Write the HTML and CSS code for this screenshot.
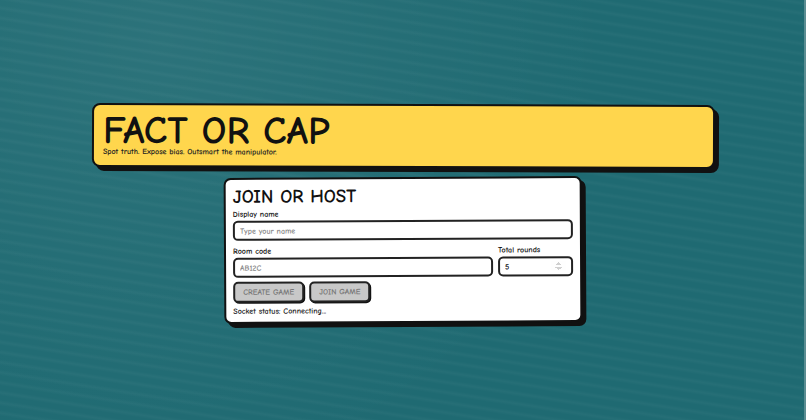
FILE: index.html
```html
<!DOCTYPE html>
<html lang="en">
<head>
    <meta charset="UTF-8">
    <meta name="viewport" content="width=device-width, initial-scale=1.0">
    <title>Fact or Cap</title>
    <link rel="stylesheet" href="styles.css">
</head>
<body>
    <main class="app">
        <header class="hero">
            <h1>FACT OR CAP</h1>
            <p>Spot truth. Expose bias. Outsmart the manipulator.</p>
        </header>

        <form class="panel">
            <h2>JOIN OR HOST</h2>
            <div class="field">
                <label for="name">Display name</label>
                <input type="text" id="name" placeholder="Type your name">
            </div>
            <div class="row">
                <div class="field field-code">
                    <label for="code">Room code</label>
                    <input type="text" id="code" placeholder="AB12C">
                </div>
                <div class="field field-rounds">
                    <label for="rounds">Total rounds</label>
                    <input type="number" id="rounds" min="1" max="20" value="5">
                </div>
            </div>
            <div class="actions">
                <button type="button" disabled>CREATE GAME</button>
                <button type="button" disabled>JOIN GAME</button>
            </div>
            <p class="status">Socket status: Connecting...</p>
        </form>
    </main>
</body>
</html>
```

FILE: styles.css
```css
* {
    box-sizing: border-box;
}

/* Body styles */
body {
    margin: 0;
    min-height: 100vh;
    border-right: 2px solid #5a8d92;
    font-family: "Comic Sans MS", "Comic Neue", "Open Sans", sans-serif;
    font-size: 8px;
    font-weight: bold;
    line-height: 10px;
    color: #222;
    background:
        repeating-linear-gradient(9deg, rgba(255, 255, 255, 0) 0px, rgba(255, 255, 255, 0) 4px, rgba(255, 255, 255, 0.03) 7px, rgba(255, 255, 255, 0) 10px),
        radial-gradient(circle at 20% 10%, rgba(255, 255, 255, 0.06), rgba(255, 255, 255, 0) 60%),
        #1f6a72;
}

h1, h2, p {
    margin: 0;
}

h1, h2, label {
    color: #111;
}

.app {
    min-height: 100vh;
    display: flex;
    flex-direction: column;
    align-items: center;
    justify-content: center;
    gap: 9px;
    padding: 12px 6px 6px 8px;
}

/* Title banner */
.hero {
    width: 100%;
    max-width: 623px;
    padding: 10px 9px 8px;
    background-color: #ffd64d;
    border: 2px solid #111;
    border-radius: 8px;
    box-shadow: 4px 4px 0 #111;
    transform: rotate(0.2deg);
}

.hero h1 {
    font-size: 39px;
    line-height: 32px;
}

/* Join panel */
.panel {
    width: 100%;
    max-width: 358px;
    padding: 8px 7px 5px;
    display: flex;
    flex-direction: column;
    gap: 4px;
    background-color: #fff;
    border: 2px solid #111;
    border-radius: 7px;
    box-shadow: 4px 4px 0 #111;
    transform: rotate(-0.3deg);
}

.panel h2 {
    font-size: 19px;
    line-height: 18px;
}

.field {
    display: flex;
    flex-direction: column;
    gap: 1px;
}

.row {
    display: flex;
    gap: 5px;
    padding-top: 2px;
}

.field-code {
    flex: 1;
}

.field-rounds {
    width: 75px;
}

input {
    width: 100%;
    height: 20px;
    padding: 0 5px;
    font: inherit;
    color: #111;
    background-color: #fff;
    border: 2px solid #222;
    border-radius: 5px;
}

input::placeholder {
    color: #888;
}

input[type="number"]::-webkit-inner-spin-button {
    opacity: 0.4;
    height: 10px;
}

.actions {
    display: flex;
    gap: 5px;
}

button {
    height: 21px;
    padding: 0 8px;
    font: inherit;
    color: #777;
    background-color: #c8c8c8;
    border: 2px solid #222;
    border-radius: 5px;
    box-shadow: 1px 1px 0 #111;
}
```
